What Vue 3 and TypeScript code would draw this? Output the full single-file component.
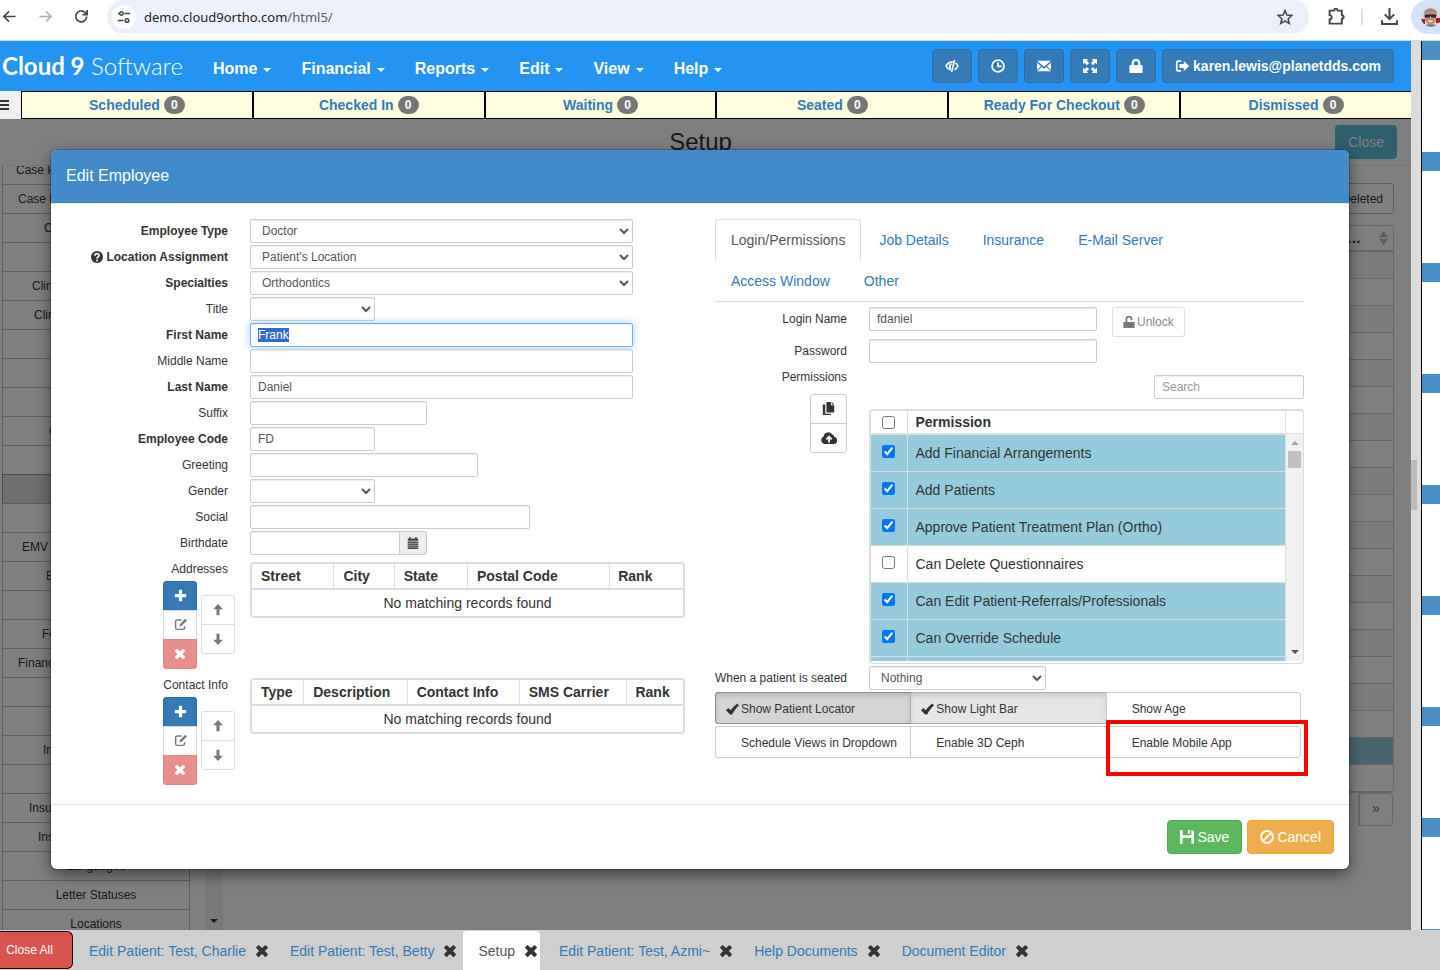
<script setup lang="ts">
import { h, onMounted, ref } from 'vue'

interface Glyph {
  fill?: string
  line?: string
  width?: number
  cut?: string
}

const glyphs: Record<string, Glyph> = {
  plus: { fill: 'M6 1h4v5h5v4h-5v5H6v-5H1V6h5z' },
  cross: { fill: 'M4 1l4 3.6L12 1l3 3-3.6 4 3.6 4-3 3-4-3.6L4 15l-3-3 3.600-4L1 4z' },
  up: { fill: 'M8 0l6.500 7H10v8H6V7H1.500z' },
  down: { fill: 'M8 16L1.500 9H6V1h4v8h4.500z' },
  edit: { line: 'M9.500 2.500H4a2 2 0 0 0-2 2V12a2 2 0 0 0 2 2h7a2 2 0 0 0 2-2v-2', width: 1.8, fill: 'M13.800 1L16 3.200 9.500 9.500 6.500 10.500l1-3z' },
  calendar: { fill: 'M1 2h2V0h2v2h6V0h2v2h2v3H1zM1 6h14v10H1z', cut: 'M1 8.500h14M1 11h14M1 13.500h14' },
  question: { fill: 'M8 0a8 8 0 1 1 0 16A8 8 0 0 1 8 0z' },
  lock: { fill: 'M.5 7h15v9H.5z', line: 'M4.300 8V4.800a3.700 3.700 0 0 1 7.400 0V8', width: 2.6 },
  unlock: { fill: 'M.5 8h15v8H.5z', line: 'M4.500 8V4.500a3.500 3.500 0 0 1 7-.5v1.500', width: 2.4 },
  eye: { line: 'M9.300 3.500C5.500 3 2.800 5 1.200 8c1.200 2.500 3 4 5.300 4.500M7.800 5.700c-3.200.3-3.200 4.300-.9 4.800M11 1L7.500 15M12 4.500c1.300.9 2.200 2 2.800 3.500-.9 2-2.200 3.400-4 4.200', width: 1.9 },
  clock: { line: 'M8 1.200a6.800 6.800 0 1 1 0 13.600A6.800 6.800 0 0 1 8 1.200zM8 4v4.500h4', width: 2 },
  mail: { fill: 'M0 2h16L8 8.800zM0 4.200l4.600 4L0 12.500zM16 4.200l-4.600 4 4.600 4.300zM5.600 9l2.400 2 2.400-2 5.600 5H0z' },
  expand: { fill: 'M0 0h6L4.200 1.800 7 4.600 4.600 7 1.800 4.200 0 6zM16 0v6l-1.800-1.800L11.400 7 9 4.600l2.800-2.800L10 0zM0 16v-6l1.800 1.800L4.600 9 7 11.400l-2.800 2.800L6 16zM16 16h-6l1.800-1.800L9 11.400 11.400 9l2.800 2.800L16 10z' },
  logout: { line: 'M7 2.500H3.500a1.500 1.500 0 0 0-1.500 1.500v8a1.500 1.500 0 0 0 1.500 1.500H7', width: 2, fill: 'M10 2l6 6-6 6v-3.800H5V5.800h5z' },
  check: { fill: 'M0 9l3-3 2.800 2.800C8.500 5.300 10.800 2.700 14 .5L16 3c-3.600 2.800-6 6.300-8.500 11H5z' },
  copy: { fill: 'M5.500 0H11v4h4v9H5.500zM12 0l3 3h-3zM1 3h3v11.500h7V16H1z' },
  cloud: { fill: 'M4 14a4 4 0 0 1-1.500-7.600A4.800 4.800 0 0 1 11 4.200a4 4 0 0 1 2.500 2.700A3.600 3.600 0 0 1 12.800 14z' },
  save: { fill: 'M0 0h3v6h10V0h1l2 2v14h-3V9H3v7H0zM9 0h2.500v4H9z' },
  ban: { line: 'M8 1.200a6.800 6.800 0 1 1 0 13.600A6.800 6.800 0 0 1 8 1.200zM3.500 12.500l9-9', width: 2.2 },
  back: { line: 'M14.500 8H2M7.500 2.500L2 8l5.500 5.500', width: 1.8 },
  forward: { line: 'M1.500 8H14M8.500 2.500L14 8l-5.500 5.500', width: 1.8 },
  reload: { line: 'M13.500 8A5.800 5.800 0 1 1 11.600 3.600L13.500 5.500M14 1v5H9', width: 1.8 },
  tune: { line: 'M1 4h1M8.500 4H15M1 12h6.500M5 2a2 2 0 1 1 0 4 2 2 0 0 1 0-4zM11.500 10a2 2 0 1 1 0 4 2 2 0 0 1 0-4z', width: 1.8 },
  star: { line: 'M8 1.500l1.900 4.600 5 .4-3.800 3.200 1.200 4.800L8 11.900l-4.300 2.600 1.200-4.800L1.100 6.500l5-.4z', width: 1.5 },
  puzzle: { line: 'M1.500 2.500h4.200c0-2.300 3.400-2.300 3.400 0h3.900v4.300c2.300 0 2.300 3.200 0 3.200v4.700H1.500v-4c2.600 0 2.600-4 0-4z', width: 1.8 },
  download: { line: 'M8 0v10M3.500 6L8 10.500 12.500 6M1 11.500V15h14v-3.500', width: 1.9 },
}

const Icon = (props: { name: string; size?: number }) => {
  const g = glyphs[props.name]
  const size = props.size ?? 12
  return h('svg', { class: 'icon', viewBox: '0 0 16 16', width: size, height: size, 'aria-hidden': 'true' }, [
    g.line ? h('path', { d: g.line, fill: 'none', stroke: 'currentColor', 'stroke-width': g.width }) : null,
    props.name === 'edit' ? h('path', { d: g.fill, fill: 'none', stroke: '#fff', 'stroke-width': 2 }) : null,
    g.fill ? h('path', { d: g.fill, fill: 'currentColor' }) : null,
    g.cut ? h('path', { d: g.cut, fill: 'none', stroke: '#eee', 'stroke-width': 0.7 }) : null,
    props.name === 'question'
      ? h('path', { d: 'M5.300 6.200C5.300 2.500 10.800 2.700 10.700 6c0 2-2.700 2-2.700 4M8 11.300v2.200', fill: 'none', stroke: '#fff', 'stroke-width': 2.2 })
      : null,
    props.name === 'cloud'
      ? h('path', { d: 'M8 12.500V7M5.300 9.300L8 6.600l2.700 2.700', fill: 'none', stroke: '#fff', 'stroke-width': 1.8 })
      : null,
  ])
}
Icon.props = ['name', 'size']

const menus = ['Home', 'Financial', 'Reports', 'Edit', 'View', 'Help']
const tools = [
  { icon: 'eye', label: 'Privacy' },
  { icon: 'clock', label: 'Time clock' },
  { icon: 'mail', label: 'Messages' },
  { icon: 'expand', label: 'Full screen' },
  { icon: 'lock', label: 'Lock' },
]
const statuses = ['Scheduled', 'Checked In', 'Waiting', 'Seated', 'Ready For Checkout', 'Dismissed']

interface SideItem { label: string; inset?: number; active?: boolean }
const sideItems: SideItem[] = [
  { label: 'Case P', inset: 13 }, { label: 'Case D', inset: 15 }, { label: 'C', inset: 41 }, { label: '' },
  { label: 'Clini', inset: 29 }, { label: 'Clini', inset: 31 }, { label: '' }, { label: '' }, { label: '' },
  { label: 'C', inset: 46 }, { label: '' }, { label: '', active: true }, { label: '' },
  { label: 'EMV', inset: 19 }, { label: 'E', inset: 43 }, { label: '' }, { label: 'Fe', inset: 39 },
  { label: 'Financ', inset: 15 }, { label: '' }, { label: 'I', inset: 47 }, { label: 'In', inset: 40 },
  { label: '' }, { label: 'Insu', inset: 26 }, { label: 'Ins', inset: 35 },
  { label: 'Languages' }, { label: 'Letter Statuses' }, { label: 'Locations' },
]

interface Field { id: string; label: string; kind: 'select' | 'text' | 'date'; size: string; value?: string; required?: boolean; help?: boolean }
const fields: Field[] = [
  { id: 'type', label: 'Employee Type', kind: 'select', size: 'full', value: 'Doctor', required: true },
  { id: 'location', label: 'Location Assignment', kind: 'select', size: 'full', value: "Patient's Location", required: true, help: true },
  { id: 'specialties', label: 'Specialties', kind: 'select', size: 'full', value: 'Orthodontics', required: true },
  { id: 'title', label: 'Title', kind: 'select', size: 'short' },
  { id: 'first', label: 'First Name', kind: 'text', size: 'full', value: 'Frank', required: true },
  { id: 'middle', label: 'Middle Name', kind: 'text', size: 'full' },
  { id: 'last', label: 'Last Name', kind: 'text', size: 'full', value: 'Daniel', required: true },
  { id: 'suffix', label: 'Suffix', kind: 'text', size: 'small' },
  { id: 'code', label: 'Employee Code', kind: 'text', size: 'short', value: 'FD', required: true },
  { id: 'greeting', label: 'Greeting', kind: 'text', size: 'medium' },
  { id: 'gender', label: 'Gender', kind: 'select', size: 'short' },
  { id: 'social', label: 'Social', kind: 'text', size: 'large' },
  { id: 'birthdate', label: 'Birthdate', kind: 'date', size: 'small' },
]

const records = [
  { label: 'Addresses', columns: [['Street', 19], ['City', 14], ['State', 17], ['Postal Code', 33], ['Rank', 17]] },
  { label: 'Contact Info', columns: [['Type', 12], ['Description', 24], ['Contact Info', 26], ['SMS Carrier', 25], ['Rank', 13]] },
] as { label: string; columns: [string, number][] }[]

const tabs = ['Login/Permissions', 'Job Details', 'Insurance', 'E-Mail Server', 'Access Window', 'Other']
const permissions = ref([
  { name: 'Add Financial Arrangements', on: true },
  { name: 'Add Patients', on: true },
  { name: 'Approve Patient Treatment Plan (Ortho)', on: true },
  { name: 'Can Delete Questionnaires', on: false },
  { name: 'Can Edit Patient-Referrals/Professionals', on: true },
  { name: 'Can Override Schedule', on: true },
])
const toggles = ref([
  { name: 'Show Patient Locator', on: true, focus: true },
  { name: 'Show Light Bar', on: true },
  { name: 'Show Age', on: false },
  { name: 'Schedule Views in Dropdown', on: false },
  { name: 'Enable 3D Ceph', on: false },
  { name: 'Enable Mobile App', on: false, marked: true },
] as { name: string; on: boolean; focus?: boolean; marked?: boolean }[])

const openTabs = ['Edit Patient: Test, Charlie', 'Edit Patient: Test, Betty', 'Setup', 'Edit Patient: Test, Azmi~', 'Help Documents', 'Document Editor']

onMounted(() => {
  const el = document.getElementById('first') as HTMLInputElement | null
  el?.focus()
  el?.select()
})
</script>

<template>
  <div class="page">
    <header class="browser">
      <button type="button" aria-label="Back"><Icon name="back" :size="15" /></button>
      <button type="button" class="dim" aria-label="Forward"><Icon name="forward" :size="15" /></button>
      <button type="button" aria-label="Reload"><Icon name="reload" :size="15" /></button>
      <div class="omnibox">
        <span class="tune"><Icon name="tune" :size="14" /></span>
        <span class="url">demo.cloud9ortho.com<span class="path">/html5/</span></span>
        <button type="button" aria-label="Bookmark"><Icon name="star" :size="16" /></button>
      </div>
      <button type="button" class="ext" aria-label="Extensions"><Icon name="puzzle" :size="17" /></button>
      <i class="divider"></i>
      <button type="button" class="dl" aria-label="Downloads"><Icon name="download" :size="17" /></button>
      <div class="profile">
        <svg viewBox="0 0 20 20" width="20" height="20" aria-hidden="true">
          <clipPath id="face"><circle cx="10" cy="10" r="10" /></clipPath>
          <g clip-path="url(#face)">
            <path fill="#d8d5d3" d="M0 0h20v20H0z" />
            <path fill="#a3192f" d="M0 12h4v5H0zM15 11h5v5h-5z" />
            <path fill="#777a78" d="M3 20c1-4 12-4 14 0z" />
            <ellipse cx="9.500" cy="9.500" rx="6" ry="8" fill="#c58b78" />
            <path fill="#8d8683" d="M3 7C3 0 16 0 16 7l-3-3H6z" />
            <path fill="#28262a" d="M3.500 7.500h12l-.5 3h-4l-1.500-1.500L8 10.500H4z" />
            <path fill="#efe4df" d="M7 13.500h5l-1 1.500H8z" />
          </g>
        </svg>
      </div>
    </header>

    <div class="shell">
      <main class="main">
        <nav class="navbar">
          <a class="brand" href="#"><b>Cloud 9</b> Software</a>
          <div class="menus">
            <button v-for="m in menus" :key="m" type="button">{{ m }}<i class="caret"></i></button>
          </div>
          <div class="tools">
            <button v-for="t in tools" :key="t.icon" type="button" :aria-label="t.label"><Icon :name="t.icon" :size="14" /></button>
            <button type="button" class="user"><Icon name="logout" :size="14" />karen.lewis@planetdds.com</button>
          </div>
        </nav>

        <div class="statusbar">
          <button type="button" class="burger" aria-label="Menu"><i></i><i></i><i></i></button>
          <a v-for="s in statuses" :key="s" href="#">{{ s }} <span class="badge">0</span></a>
        </div>

        <div class="stage">
          <section class="setup">
            <div class="setup-head">
              <h2>Setup</h2>
              <button type="button" class="btn-info">Close</button>
            </div>
            <div class="setup-body">
              <div class="side">
                <ul>
                  <li v-for="(s, i) in sideItems" :key="i" :class="{ active: s.active, offset: s.inset }" :style="s.inset ? { paddingLeft: s.inset + 'px' } : undefined">{{ s.label }}</li>
                </ul>
                <div class="side-track"><i></i></div>
              </div>
              <div class="listing">
                <button type="button" class="deleted">Deleted</button>
                <div class="grid-list">
                  <div class="grid-head">…<span class="sort"></span></div>
                  <div v-for="n in 20" :key="n" class="grid-row" :class="{ chosen: n === 19 }"></div>
                </div>
                <div class="pager"><a href="#">»</a></div>
              </div>
            </div>
          </section>
          <div class="backdrop"></div>

          <section class="modal" role="dialog" aria-labelledby="dialog-title">
            <h1 id="dialog-title">Edit Employee</h1>
            <div class="modal-body">
              <form class="details" @submit.prevent>
                <div v-for="f in fields" :key="f.id" class="row">
                  <label :for="f.id" :class="{ required: f.required }"><Icon v-if="f.help" name="question" :size="12" /> {{ f.label }}</label>
                  <select v-if="f.kind === 'select'" :id="f.id" class="control" :class="f.size"><option>{{ f.value }}</option></select>
                  <input v-else-if="f.kind === 'text'" :id="f.id" class="control" :class="f.size" type="text" :value="f.value" />
                  <div v-else class="date" :class="f.size">
                    <input :id="f.id" class="control" type="text" />
                    <button type="button" aria-label="Pick a date"><Icon name="calendar" :size="12" /></button>
                  </div>
                </div>
                <div v-for="r in records" :key="r.label" class="record">
                  <div class="record-side">
                    <span>{{ r.label }}</span>
                    <div class="record-buttons">
                      <div class="stack">
                        <button type="button" class="add" aria-label="Add"><Icon name="plus" :size="13" /></button>
                        <button type="button" class="change" aria-label="Edit"><Icon name="edit" :size="13" /></button>
                        <button type="button" class="remove" aria-label="Remove"><Icon name="cross" :size="12" /></button>
                      </div>
                      <div class="stack arrows">
                        <button type="button" aria-label="Move up"><Icon name="up" :size="12" /></button>
                        <button type="button" aria-label="Move down"><Icon name="down" :size="12" /></button>
                      </div>
                    </div>
                  </div>
                  <div class="record-table">
                    <table>
                      <colgroup><col v-for="c in r.columns" :key="c[0]" :style="{ width: c[1] + '%' }" /></colgroup>
                      <thead><tr><th v-for="c in r.columns" :key="c[0]" scope="col">{{ c[0] }}</th></tr></thead>
                      <tbody><tr><td :colspan="r.columns.length">No matching records found</td></tr></tbody>
                    </table>
                  </div>
                </div>
              </form>

              <form class="access" @submit.prevent>
                <ul class="tabs">
                  <li v-for="(t, i) in tabs" :key="t"><a href="#" :class="{ active: i === 0 }">{{ t }}</a></li>
                </ul>
                <div class="row login-row">
                  <label for="login">Login Name</label>
                  <div class="inline">
                    <input id="login" class="control medium" type="text" value="fdaniel" />
                    <button type="button" class="unlock"><Icon name="unlock" :size="12" />Unlock</button>
                  </div>
                </div>
                <div class="row">
                  <label for="password">Password</label>
                  <input id="password" class="control medium" type="password" />
                </div>
                <div class="row perm-row">
                  <div class="perm-side">
                    <span>Permissions</span>
                    <div class="stack">
                      <button type="button" aria-label="Copy permissions"><Icon name="copy" :size="13" /></button>
                      <button type="button" aria-label="Upload permissions"><Icon name="cloud" :size="16" /></button>
                    </div>
                  </div>
                  <div class="perm-main">
                    <input class="control search" type="search" placeholder="Search" aria-label="Search" />
                    <div class="perm-table">
                      <div class="perm-clip">
                        <table>
                          <thead>
                            <tr><th class="tick"><input type="checkbox" aria-label="Select all" /></th><th scope="col">Permission</th></tr>
                          </thead>
                          <tbody>
                            <tr v-for="p in permissions" :key="p.name" :class="{ on: p.on }">
                              <td class="tick"><input v-model="p.on" type="checkbox" :aria-label="p.name" /></td>
                              <td>{{ p.name }}</td>
                            </tr>
                            <tr class="on"><td></td><td></td></tr>
                          </tbody>
                        </table>
                      </div>
                      <div class="perm-scroll">
                        <i class="corner"></i>
                        <div class="track"><i class="arrow-up"></i><i class="thumb"></i><i class="arrow-down"></i></div>
                      </div>
                    </div>
                  </div>
                </div>
                <div class="row seated-row">
                  <label for="seated">When a patient is seated</label>
                  <select id="seated" class="control small"><option>Nothing</option></select>
                </div>
                <div class="toggles">
                  <button v-for="t in toggles" :key="t.name" type="button" :aria-pressed="t.on" :class="{ on: t.on, focus: t.focus }" @click="t.on = !t.on">
                    <span class="mark"><Icon v-if="t.on" name="check" :size="13" /></span>{{ t.name }}
                    <i v-if="t.marked" class="callout"></i>
                  </button>
                </div>
              </form>
            </div>
            <footer>
              <button type="button" class="save"><Icon name="save" :size="14" />Save</button>
              <button type="button" class="cancel"><Icon name="ban" :size="14" />Cancel</button>
            </footer>
          </section>
        </div>
      </main>
      <div class="main-scroll"><i></i></div>
      <aside class="dock"></aside>
    </div>

    <nav class="taskbar">
      <button type="button" class="close-all">Close All</button>
      <div v-for="t in openTabs" :key="t" class="task" :class="{ current: t === 'Setup' }">
        <a href="#">{{ t }}</a>
        <button type="button" :aria-label="'Close ' + t"><Icon name="cross" :size="14" /></button>
      </div>
    </nav>
  </div>
</template>

<style>
html, body { margin: 0; background: #fff; }
</style>

<style scoped>
* { box-sizing: border-box; }
.page { min-height: 100vh; display: flex; flex-direction: column; overflow: hidden; font: 14px/20px "Liberation Sans", Arial, sans-serif; color: #333; }
button { font: inherit; color: inherit; border: 0; background: none; padding: 0; cursor: pointer; display: flex; align-items: center; justify-content: center; }
a { text-decoration: none; color: #337ab7; }
ul { list-style: none; margin: 0; padding: 0; }
.icon { display: block; flex: none; }

.browser { display: flex; align-items: center; height: 41px; padding-bottom: 7px; border-bottom: 1px solid #dadada; color: #444746; background: #fff; }
.browser > button { width: 36px; flex: none; }
.browser > button:first-child { width: 18px; margin-right: 9px; }
.browser .dim { color: #b0b3b3; }
.omnibox { flex: 1; display: flex; align-items: center; height: 34px; margin-left: 8px; padding: 0 16px 0 5px; border-radius: 17px; background: #ecf0fa; }
.tune { display: flex; align-items: center; justify-content: center; width: 24px; height: 24px; margin-right: 8px; border-radius: 12px; background: #fff; }
.url { flex: 1; font: 13px/20px "Noto Sans", sans-serif; color: #1f2020; }
.url .path { color: #5b5e61; }
.browser > .ext { width: 18px; margin-left: 18px; }
.divider { width: 2px; height: 16px; margin: 0 17px 0 16px; background: #d3e3fd; }
.browser > .dl { width: 18px; }
.profile { width: 29px; height: 34px; margin-left: 13px; padding: 7px 0 0 10px; border-radius: 17px 0 0 17px; background: #d3e3fd; overflow: hidden; }

.shell { flex: 1; display: flex; }
.main { flex: 1; min-width: 0; display: flex; flex-direction: column; }
.main-scroll { width: 10px; padding-top: 419px; background: #dcdcdc; }
.main-scroll i { display: block; width: 6px; height: 50px; background: #bbb; }
.dock { width: 19px; border-left: 1px solid #000; background: repeating-linear-gradient(#4a90c8 0 19px, #fff 19px 111px); }

.navbar { display: flex; align-items: center; height: 50px; padding: 0 17px 0 2px; background: #2494f2; color: #fff; }
.brand { width: 211px; font: 300 24px/26px Lato, sans-serif; color: #fff; white-space: nowrap; }
.brand b { font-weight: 700; }
.menus { display: flex; gap: 30px; flex: 1; padding-top: 5px; font-size: 16px; font-weight: 700; }
.menus button { gap: 6px; }
.caret { border: 4px solid transparent; border-top-color: #fff; border-bottom: 0; margin-top: 3px; }
.tools { display: flex; gap: 6px; font-weight: 700; }
.tools button { width: 40px; height: 34px; border: 1px solid #2e6da4; border-radius: 4px; background: #337ab7; padding-bottom: 1px; }
.tools .user { width: auto; padding: 0 12px; gap: 4px; }

.statusbar { display: flex; height: 28px; background: #f0f0f0; }
.burger { width: 21px; flex-direction: column; align-items: flex-start; gap: 2px; }
.burger i { width: 9px; height: 2px; background: #333; }
.statusbar a { flex: 1; display: flex; align-items: center; justify-content: center; gap: 4px; border: 1px solid #000; background: #ffffdf; font-weight: 700; }
.statusbar a:last-child { border-right: 0; }
.badge { min-width: 21px; height: 18px; padding: 0 7px; border-radius: 10px; background: #777; color: #fff; font-size: 12px; line-height: 18px; text-align: center; }

.stage { flex: 1; position: relative; padding: 31px 62px 61px 51px; background: #fff; }
.setup { position: absolute; inset: 0; display: flex; flex-direction: column; overflow: hidden; }
.setup-head { display: grid; grid-template-columns: 1fr auto 1fr; align-items: center; height: 47px; padding: 0 14px 0 4px; border-bottom: 1px solid #eee; flex: none; }
.setup-head h2 { grid-column: 2; margin: 0; font-weight: 400; font-size: 24px; line-height: 26px; }
.btn-info { justify-self: end; height: 34px; padding: 0 13px; border-radius: 4px; background: #5bc0de; color: #fff; }
.setup-body { flex: 1; min-height: 0; display: flex; overflow: hidden; }
.side { display: flex; width: 223px; overflow: hidden; }
.side ul { flex: 1; margin: -11px 15px 0 2px; font-size: 12px; }
.side li { height: 30px; margin-bottom: -1px; border: 1px solid #bbb; text-align: center; line-height: 28px; white-space: nowrap; }
.side li.offset { text-align: left; }
.side li.active { background: #ddd; border-color: #999; }
.side-track { width: 18px; background: #f1f1f1; display: flex; align-items: flex-end; justify-content: center; padding-bottom: 7px; }
.side-track i { border: 4px solid transparent; border-top-color: #333; border-bottom: 0; }
.listing { flex: 1; padding: 17px 17px 0 20px; display: flex; flex-direction: column; align-items: flex-end; }
.deleted { height: 31px; padding: 0 10px; border: 1px solid #bbb; border-radius: 3px; font-size: 12px; }
.grid-list { width: 100%; margin-top: 11px; border: 1px solid #ccc; border-bottom-width: 2px; border-radius: 4px; }
.grid-head { display: flex; align-items: center; justify-content: flex-end; gap: 18px; height: 26px; padding-right: 5px; border-bottom: 2px solid #ccc; font-weight: 700; }
.sort { width: 9px; height: 14px; background: #bbb; clip-path: polygon(50% 0, 100% 45%, 0 45%, 0 55%, 100% 55%, 50% 100%, 0 55%, 0 45%); }
.grid-row { height: 27px; border-bottom: 1px solid #ccc; }
.grid-row:nth-child(even) { background: #f9f9f9; }
.grid-row.chosen { background: #92cddd; }
.grid-row:last-child { height: 26px; border-bottom: 0; }
.pager { display: flex; height: 33px; margin: 0 1px 0 0; border: 1px solid #ccc; border-radius: 0 4px 4px 0; }
.pager a { width: 33px; border-left: 1px solid #ccc; text-align: center; line-height: 29px; }
.backdrop { position: absolute; inset: 0; background: rgba(0, 0, 0, .5); }

.modal { position: relative; border-radius: 6px; background: #fff; box-shadow: 0 5px 15px rgba(0, 0, 0, .5), 0 0 0 1px rgba(0, 0, 0, .2); }
.modal h1 { height: 54px; margin: 0; padding: 0 15px; border-bottom: 1px solid #e5e5e5; border-radius: 6px 6px 0 0; background: #428bca; color: #fff; font-size: 16px; font-weight: 400; line-height: 51px; }
.modal-body { display: grid; grid-template-columns: 619fr 589fr; gap: 30px; padding: 15px 45px 17px 15px; font-size: 12px; }
.details { display: flex; flex-direction: column; gap: 2px; min-width: 0; }
.row { display: grid; grid-template-columns: 162px 1fr; gap: 22px; }
.access .row { grid-template-columns: 132px 1fr; }
.row label { display: flex; align-items: center; justify-content: flex-end; gap: 3px; height: 24px; white-space: nowrap; }
.required { font-weight: 700; }
.control { width: 100%; height: 24px; margin: 0; padding: 0 7px; border: 1px solid #ccc; border-radius: 2px; background: #fff; color: #555; font: 12px/22px "Liberation Sans", Arial, sans-serif; box-shadow: inset 0 1px 1px rgba(0, 0, 0, .075); outline: 0; }
.control:focus { border-color: #66afe9; box-shadow: inset 0 1px 1px rgba(0, 0, 0, .075), 0 0 8px rgba(102, 175, 233, .6); }
.control::selection { background: #3367d1; color: #fff; }
.control::placeholder { color: #999; }
.full { width: 88%; }
.short { width: 125px; }
.small { width: 177px; }
.medium { width: 228px; }
.large { width: 280px; }
.date { display: flex; }
.date .control { flex: 1; min-width: 0; border-radius: 2px 0 0 2px; }
.date button { width: 27px; border: 1px solid #ccc; border-left: 0; border-radius: 0 3px 3px 0; background: #eee; color: #444; }

.record { display: grid; grid-template-columns: 169px 1fr; gap: 15px; height: 114px; }
.record-side > span { display: block; padding-right: 7px; text-align: right; line-height: 24px; }
.record-buttons { display: flex; justify-content: flex-end; align-items: flex-start; gap: 4px; }
.stack { display: flex; flex-direction: column; }
.stack button { width: 34px; height: 30px; padding-bottom: 1px; border: 1px solid #ccc; background: #fff; }
.stack button + button { margin-top: -1px; }
.stack button:first-child { border-radius: 3px 3px 0 0; }
.stack button:last-child { border-radius: 0 0 3px 3px; }
.stack .add { border-color: #2e6da4; background: #337ab7; color: #fff; }
.stack .change { border-color: #ddd; color: #777; }
.stack .remove { border-color: #e08381; background: #e88f8c; color: #fff; }
.arrows { margin-top: 14px; }
.arrows button { border-color: #ddd; color: #777; }
.record-table { align-self: start; margin-top: 5px; border: 2px solid #ddd; border-radius: 4px; font-size: 14px; }
table { width: 100%; border-collapse: collapse; table-layout: fixed; }
.record-table th { height: 25px; padding: 0 0 0 9px; border-bottom: 2px solid #ddd; border-right: 1px solid #ddd; text-align: left; white-space: nowrap; line-height: 18px; }
.record-table th:last-child { border-right: 0; padding-left: 8px; }
.record-table td { height: 27px; padding: 0 0 1px; text-align: center; }

.access { min-width: 0; }
.tabs { display: flex; flex-wrap: wrap; border-bottom: 1px solid #ddd; font-size: 14px; }
.tabs li { height: 41px; margin-right: 2px; }
.tabs a { display: block; height: 42px; padding: 10px 15px; border: 1px solid transparent; border-radius: 4px 4px 0 0; }
.tabs a.active { border-color: #ddd #ddd transparent; color: #555; }
.login-row { margin-top: 5px; height: 32px; }
.inline { display: flex; gap: 15px; }
.unlock { height: 30px; padding: 0 10px; gap: 2px; border: 1px solid #ddd; border-radius: 3px; color: #888; }
.unlock .icon { color: #777; }
.perm-row { margin-top: 2px; }
.perm-side { display: flex; flex-direction: column; align-items: flex-end; line-height: 24px; }
.perm-side .stack { margin-top: 5px; }
.perm-side button { width: 37px; }
.perm-main { padding-top: 10px; }
.search { display: block; width: 150px; margin: 0 0 10px auto; }
.perm-table { display: flex; height: 255px; padding-bottom: 2px; border: solid #ddd; border-width: 2px 1px 1px 2px; border-radius: 4px; font-size: 14px; overflow: hidden; }
.perm-clip { flex: 1; min-width: 0; overflow: hidden; border-right: 1px solid #ddd; }
.perm-table th { height: 23px; padding: 0 8px; border-bottom: 2px solid #ddd; text-align: left; line-height: 20px; }
.perm-table td { height: 37px; padding: 0 8px; border-bottom: 1px solid #ddd; }
.perm-table .tick { width: 36px; padding: 0; border-right: 1px solid #ddd; text-align: center; }
.perm-table td:first-child { border-right: 1px solid #ddd; }
.tick input { display: block; width: 13px; height: 13px; margin: 0 auto; }
td.tick input { margin-bottom: 3px; }
.on td { background: #94ccde; }
.perm-scroll { width: 17px; display: flex; flex-direction: column; }
.corner { height: 23px; border-bottom: 1px solid #ddd; }
.track { flex: 1; display: flex; flex-direction: column; align-items: center; padding: 7px 0; background: #f1f1f1; }
.arrow-up { border: 4px solid transparent; border-bottom-color: #a3a3a3; border-top: 0; }
.arrow-down { margin-top: auto; border: 4px solid transparent; border-top-color: #505050; border-bottom: 0; }
.thumb { width: 13px; height: 17px; margin-top: 6px; background: #c1c1c1; }
.seated-row { margin-top: 2px; }
.toggles { display: grid; grid-template-columns: repeat(3, 1fr); row-gap: 2px; margin: 2px 3px 0 0; }
.toggles button { position: relative; justify-content: flex-start; height: 32px; padding: 2px 10px 0; border: 1px solid #ccc; border-right: 0; background: #fff; white-space: nowrap; }
.toggles button:nth-child(3n) { border-right: 1px solid #ccc; border-radius: 0 3px 3px 0; }
.toggles button:nth-child(3n + 1) { border-radius: 3px 0 0 3px; }
.toggles .on { background: #e6e6e6; border-color: #adadad; box-shadow: inset 0 3px 5px rgba(0, 0, 0, .125); }
.toggles .focus { background: #d4d4d4; border-color: #8c8c8c; }
.mark { width: 15px; }
.callout { position: absolute; inset: -7px -8px -19px -1px; border: 4px solid #f00; border-radius: 1px; pointer-events: none; }

.modal footer { display: flex; justify-content: flex-end; gap: 5px; padding: 15px; border-top: 1px solid #e5e5e5; }
.modal footer button { height: 34px; padding: 0 12px; gap: 3px; border: 1px solid #4cae4c; border-radius: 4px; background: #5cb85c; color: #fff; }
.modal footer .cancel { border-color: #eea236; background: #f0ad4e; }

.taskbar { display: flex; height: 40px; padding-top: 1px; background: #cfcfcf; }
.close-all { width: 73px; height: 38px; margin-right: 1px; padding-right: 13px; border: 1px solid #000; border-left: 0; border-radius: 0 6px 6px 0; background: #d9534f; color: #fff; font-size: 12px; white-space: nowrap; }
.task { display: flex; align-items: center; gap: 9px; margin-right: 4px; padding: 0 2px 0 15px; border-radius: 4px 4px 0 0; white-space: nowrap; }
.task.current { background: #fff; }
.task.current a { color: #555; }
</style>
